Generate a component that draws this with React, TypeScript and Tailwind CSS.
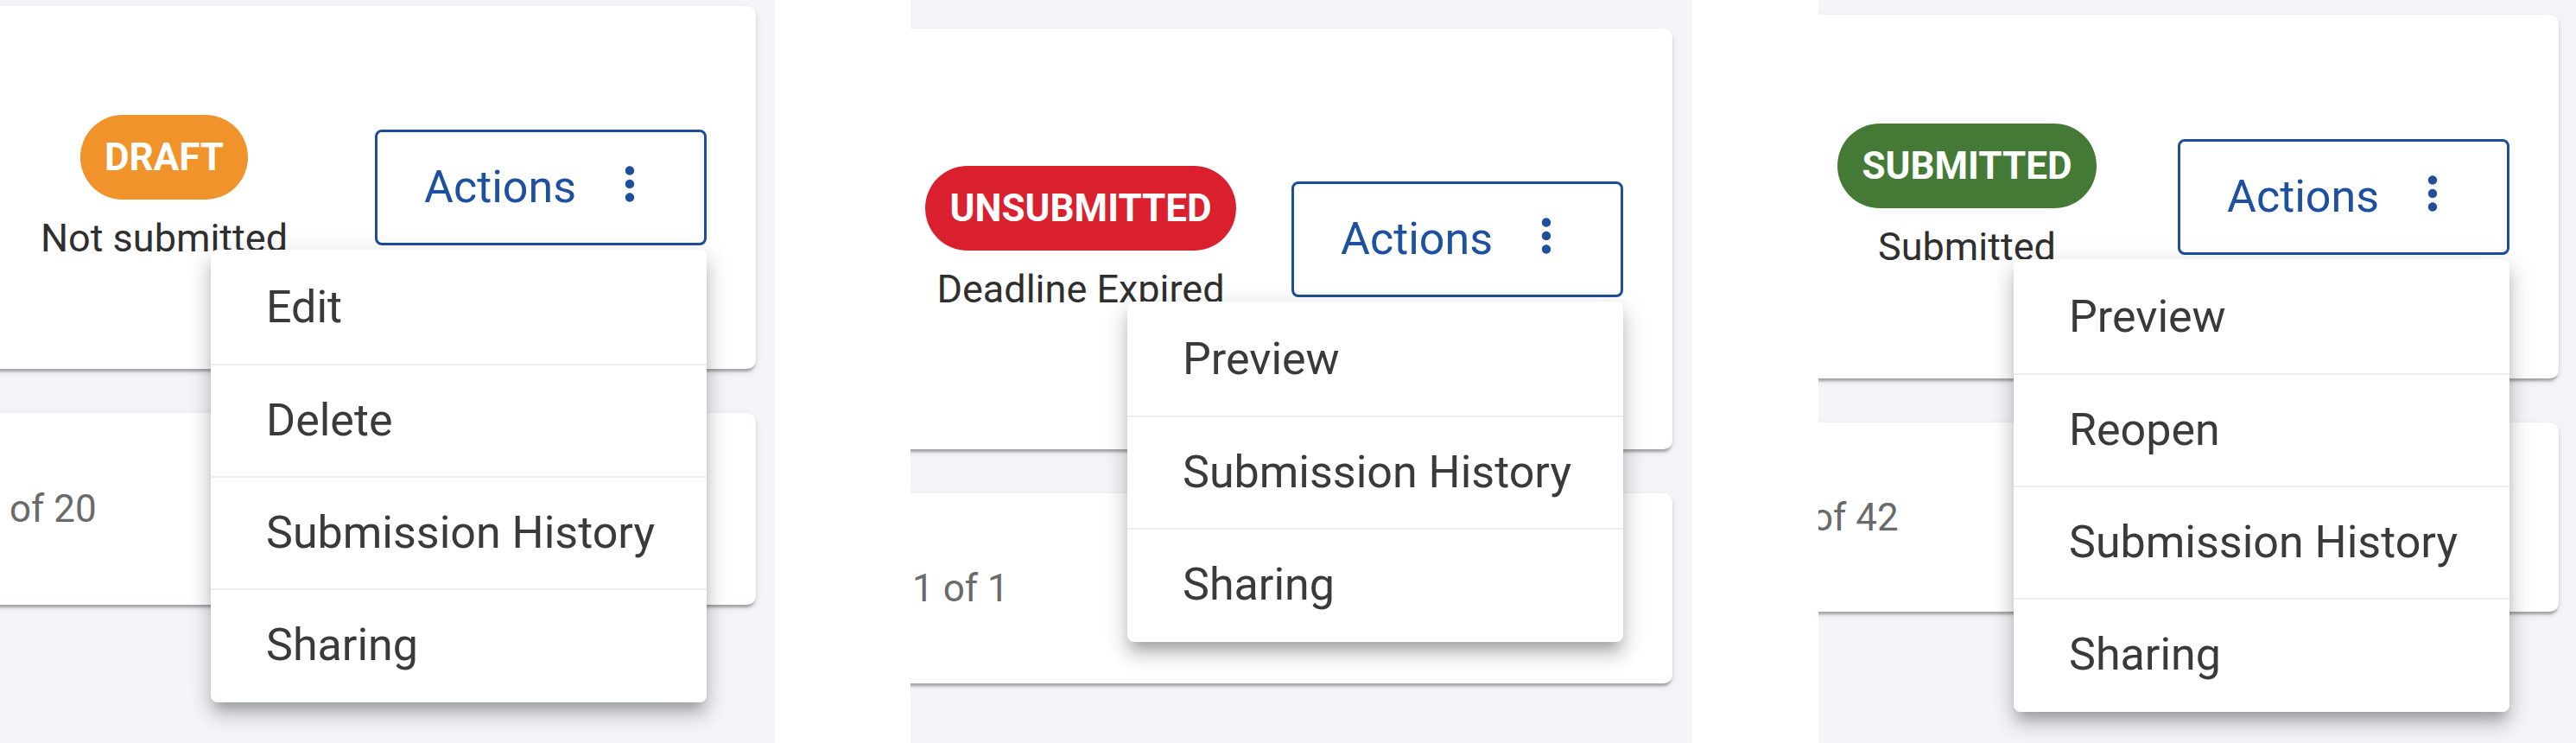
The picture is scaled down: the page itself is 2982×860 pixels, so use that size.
import React from 'react';

type Panel = {
  width: string;
  gapLeft: string;
  padTop: string;
  cardRight: string;
  cardHeight: string;
  pagerHeight: string;
  badge: string;
  badgeColor: string;
  status: string;
  items: string[];
  pager: string;
  pagerOffset: string;
};

const panels: Panel[] = [
  {
    width: 'w-[897px]',
    gapLeft: 'ml-0',
    padTop: 'pt-[7px]',
    cardRight: 'mr-[22px]',
    cardHeight: 'h-[420px]',
    pagerHeight: 'h-[222px]',
    badge: 'DRAFT',
    badgeColor: 'bg-[#f0932b]',
    status: 'Not submitted',
    items: ['Edit', 'Delete', 'Submission History', 'Sharing'],
    pager: 'of 20',
    pagerOffset: 'ml-[41px]',
  },
  {
    width: 'w-[905px]',
    gapLeft: 'ml-[157px]',
    padTop: 'pt-[33px]',
    cardRight: 'mr-[23px]',
    cardHeight: 'h-[487px]',
    pagerHeight: 'h-[220px]',
    badge: 'UNSUBMITTED',
    badgeColor: 'bg-[#da1f2f]',
    status: 'Deadline Expired',
    items: ['Preview', 'Submission History', 'Sharing'],
    pager: '1 of 1',
    pagerOffset: 'ml-[32px]',
  },
  {
    width: 'w-[877px]',
    gapLeft: 'ml-[146px]',
    padTop: 'pt-[17px]',
    cardRight: 'mr-[20px]',
    cardHeight: 'h-[421px]',
    pagerHeight: 'h-[219px]',
    badge: 'SUBMITTED',
    badgeColor: 'bg-[#447a36]',
    status: 'Submitted',
    items: ['Preview', 'Reopen', 'Submission History', 'Sharing'],
    pager: 'of 42',
    pagerOffset: 'ml-[22px]',
  },
];

const cardShadow =
  'shadow-[0_6px_3px_-3px_rgba(0,0,0,0.18),0_3px_3px_0_rgba(0,0,0,0.12),0_3px_9px_0_rgba(0,0,0,0.10)]';

const MoreVert = () => (
  <svg viewBox="0 0 24 24" className="w-[62px] h-[62px] mb-[8px] fill-[#1d4f9e]">
    <path d="M12 8c1.1 0 2-.9 2-2s-.9-2-2-2-2 .9-2 2 .9 2 2 2zm0 2c-1.1 0-2 .9-2 2s.9 2 2 2 2-.9 2-2-.9-2-2-2zm0 6c-1.1 0-2 .9-2 2s.9 2 2 2 2-.9 2-2-.9-2-2-2z" />
  </svg>
);

const ActionsMenu = ({ items }: { items: string[] }) => (
  <div className="relative">
    <button className="flex w-[384px] h-[134px] items-center justify-between rounded-[8px] border-[3px] border-[#1d4e9b] bg-white pl-[54px] pr-[55px] text-[52px] text-[#1d50a0]">
      <span>Actions</span>
      <MoreVert />
    </button>
    <div className="absolute right-0 top-full z-10 mt-[5px] w-[574px] rounded-[8px] bg-white py-[2px] shadow-[0_12px_14px_-6px_rgba(0,0,0,0.22),0_16px_22px_2px_rgba(0,0,0,0.12),0_6px_28px_4px_rgba(0,0,0,0.10)]">
      {items.map((item, i) => (
        <div
          key={item}
          className={`flex h-[130px] items-center pl-[64px] text-[52px] text-[#3a3a3a] ${
            i > 0 ? 'border-t-2 border-[#eeeeee]' : ''
          }`}
        >
          {item}
        </div>
      ))}
    </div>
  </div>
);

const Shot = ({ p }: { p: Panel }) => (
  <div className={`${p.width} ${p.gapLeft} ${p.padTop} h-[860px] shrink-0 overflow-hidden bg-[#f4f5f9]`}>
    <div className={`-ml-[30px] ${p.cardRight} flex flex-col gap-[51px]`}>
      <div className={`${p.cardHeight} ${cardShadow} flex items-center justify-end gap-[44px] rounded-[10px] bg-white pr-[57px]`}>
        <div className="flex w-[400px] flex-col items-center">
          <span
            className={`${p.badgeColor} flex h-[98px] items-center rounded-full px-[28px] text-[44px] font-bold text-white`}
          >
            {p.badge}
          </span>
          <span className="mt-[18px] text-[45px] leading-[53px] text-[#2f2f2f]">{p.status}</span>
        </div>
        <ActionsMenu items={p.items} />
      </div>
      <div className={`${p.pagerHeight} ${cardShadow} flex items-center rounded-[10px] bg-white`}>
        <span className={`${p.pagerOffset} text-[44px] text-[#6a6a6a]`}>{p.pager}</span>
      </div>
    </div>
  </div>
);

const App = () => {
  return (
    <div className="flex h-[860px] w-[2982px] overflow-hidden bg-white font-['Roboto',sans-serif]">
      {panels.map((p) => (
        <Shot key={p.badge} p={p} />
      ))}
    </div>
  );
};

export default App;
